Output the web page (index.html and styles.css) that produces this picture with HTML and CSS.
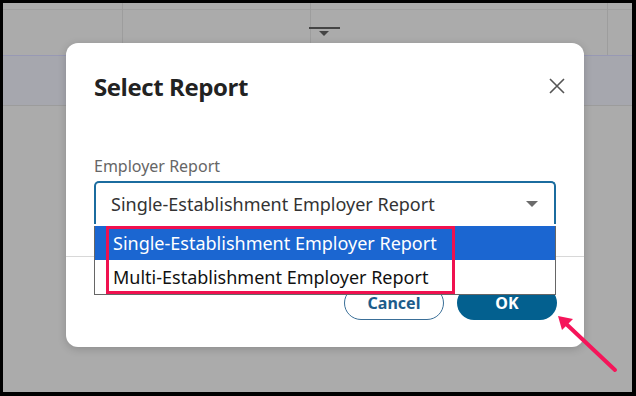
FILE: index.html
```html
<!DOCTYPE html>
<html lang="en">
<head>
  <meta charset="UTF-8">
  <title>Select Report</title>
  <link rel="stylesheet" href="styles.css">
</head>
<body>
  <div class="frame">
    <div class="app">
      <div class="grid-head">
        <div class="cell c1"></div>
        <div class="cell c2"></div>
        <div class="cell c3">
          <span class="sort-icon"></span>
        </div>
        <div class="cell c4"></div>
      </div>
      <div class="band"></div>
    </div>

    <div class="modal">
      <div class="modal-head">
        <h2>Select Report</h2>
        <button class="close" aria-label="Close">
          <svg width="16" height="16" viewBox="0 0 16 16"><path d="M1 1 L15 15 M15 1 L1 15" stroke="#555" stroke-width="1.6" fill="none"/></svg>
        </button>
      </div>

      <div class="modal-body">
        <label class="field-label">Employer Report</label>
        <div class="select">
          <span>Single-Establishment Employer Report</span>
          <span class="caret"></span>
        </div>
      </div>

      <div class="modal-foot">
        <button class="btn btn-outline">Cancel</button>
        <button class="btn btn-primary">OK</button>
      </div>

      <ul class="options">
        <li class="selected">Single-Establishment Employer Report</li>
        <li>Multi-Establishment Employer Report</li>
      </ul>
      <div class="highlight"></div>
    </div>

    <svg class="pointer" width="80" height="80" viewBox="0 0 80 80">
      <path d="M59 57 L6 7" stroke="#f5155a" stroke-width="4" stroke-linecap="round"/>
      <path d="M2 3 L17 6 L6 17 Z" fill="#f5155a"/>
    </svg>
  </div>
</body>
</html>
```

FILE: styles.css
```css
* {
  box-sizing: border-box;
}

body {
  margin: 0;
  background: #000;
  font-family: "Noto Sans", "Open Sans", sans-serif;
}

.frame {
  position: relative;
  width: 636px;
  height: 396px;
  border-style: solid;
  border-color: #000;
  border-width: 3px 4px 4px 3px;
  background: #ababab;
  overflow: hidden;
}

/* page behind the overlay */
.grid-head {
  display: flex;
  height: 52px;
  background: linear-gradient(#a0a0a0, #a0a0a0) 0 6px / 100% 1px no-repeat;
}

.cell {
  height: 100%;
  border-right: 1px solid #9d9d9d;
  position: relative;
}

.c1 { width: 120px; }
.c2 { width: 188px; }
.c3 { width: 297px; }
.c4 { flex: 1; border-right: none; }

.sort-icon {
  position: absolute;
  left: -2px;
  top: 24px;
  width: 31px;
  height: 2px;
  background: #444;
}

.sort-icon::after {
  content: "";
  position: absolute;
  left: 10px;
  top: 4px;
  border-left: 5px solid transparent;
  border-right: 5px solid transparent;
  border-top: 5px solid #444;
}

.band {
  height: 51px;
  background: #a6a7ae;
  border-top: 1px solid #9899b4;
  border-bottom: 1px solid #9c9c9c;
}

/* dialog */
.modal {
  position: absolute;
  left: 63px;
  top: 40px;
  width: 518px;
  height: 304px;
  background: #fff;
  border-radius: 12px;
  box-shadow: 0 2px 8px rgba(0, 0, 0, 0.18);
  display: flex;
  flex-direction: column;
}

.modal-head {
  height: 60px;
  display: flex;
  align-items: flex-end;
  justify-content: space-between;
  padding: 0 19px 0 28px;
}

.modal-head h2 {
  margin: 0;
  font-family: "Open Sans", sans-serif;
  font-size: 24px;
  line-height: 32px;
  font-weight: 700;
  color: #222;
  letter-spacing: -0.4px;
}

.close {
  background: none;
  border: none;
  padding: 0;
  margin-bottom: 9px;
  width: 16px;
  height: 16px;
  display: flex;
}

.modal-body {
  padding: 53px 28px 0 28px;
  height: 153px;
}

.field-label {
  display: block;
  font-size: 16px;
  color: #666;
  line-height: 20px;
}

.select {
  margin-top: 5px;
  height: 43px;
  border: 2px solid #1b6c9f;
  border-bottom: none;
  border-radius: 5px 5px 0 0;
  display: flex;
  align-items: center;
  justify-content: space-between;
  padding: 0 16px 0 15px;
  font-size: 18px;
  color: #333;
}

.caret {
  border-left: 6px solid transparent;
  border-right: 6px solid transparent;
  border-top: 6px solid #6b6b6b;
}

.modal-foot {
  border-top: 1px solid #d8d8d8;
  display: flex;
  justify-content: flex-end;
  gap: 13px;
  padding: 29px 27px 0 0;
}

.btn {
  width: 100px;
  height: 34px;
  border-radius: 17px;
  font-family: "Noto Sans", sans-serif;
  font-size: 16px;
  font-weight: 700;
}

.btn-outline {
  background: #fff;
  border: 1px solid #3a6f98;
  color: #1d5c8a;
}

.btn-primary {
  background: #03608f;
  border: none;
  color: #fff;
}

/* open list of the select */
.options {
  position: absolute;
  left: 28px;
  top: 183px;
  width: 462px;
  margin: 0;
  padding: 0;
  list-style: none;
  border: 1px solid #666;
  border-top: none;
  background: #fff;
}

.options li {
  height: 34px;
  line-height: 34px;
  padding-left: 18px;
  font-size: 18px;
  color: #111;
}

.options li.selected {
  background: #1b66d1;
  color: #fff;
}

.highlight {
  position: absolute;
  left: 40px;
  top: 183px;
  width: 349px;
  height: 68px;
  border: 3px solid #f0114f;
}

.pointer {
  position: absolute;
  left: 553px;
  top: 310px;
}
```
